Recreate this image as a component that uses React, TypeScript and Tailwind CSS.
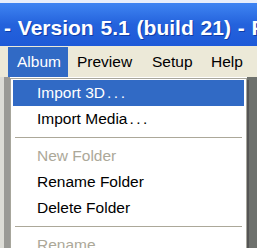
const menus = [
  { label: "Album", w: "w-[60px]" },
  { label: "Preview", w: "w-[75px]" },
  { label: "Setup", w: "w-[59px]" },
  { label: "Help", w: "w-[50px]" },
];

type Item = { label: string; dots?: boolean; disabled?: boolean; active?: boolean } | "sep";

const items: Item[] = [
  { label: "Import 3D", dots: true, active: true },
  { label: "Import Media", dots: true },
  "sep",
  { label: "New Folder", disabled: true },
  { label: "Rename Folder" },
  { label: "Delete Folder" },
  "sep",
  { label: "Rename", disabled: true },
];

function App() {
  return (
    <div className="relative w-[257px] h-[248px] overflow-hidden bg-[#9b9b98] font-['Liberation_Sans',Arial,sans-serif]">
      <div className="h-[3px] bg-[#e8eefb]" />
      <div className="h-[43px] bg-gradient-to-b from-[#3f84f2] via-[#2462dc] to-[#1e5ad8] flex items-center pl-[4px] pt-[7px]">
        <span className="whitespace-nowrap text-white font-bold text-[21px] [word-spacing:1px] [text-shadow:1px_1px_0_#0f3da8]">
          - Version 5.1 (build 21) - P
        </span>
      </div>
      <div className="h-[31px] bg-[#ece9d8] flex pl-[8px] pt-[1px]">
        {menus.map((m, i) => (
          <div
            key={m.label}
            className={
              i === 0
                ? `${m.w} shrink-0 h-[30px] pl-[9px] leading-[30px] text-[15.5px] bg-[#316ac5] text-white`
                : `${m.w} shrink-0 h-[30px] pl-[9px] leading-[30px] text-[15.5px] text-black`
            }
          >
            {m.label}
          </div>
        ))}
      </div>
      <div className="flex h-[171px]">
        <div className="w-[4px] bg-[#dcdcd6]" />
        <div className="w-[6px] bg-[#9a9a96]" />
        <div className="flex-1 bg-[#ffffff]" />
        <div className="w-[10px] bg-[#6e716d]" />
      </div>

      <div className="absolute left-[10px] top-[78px] w-[237px] bg-white border border-[#a7a69c] py-[1px] px-[2px] shadow-[2px_2px_0_#555]">
        {items.map((it, i) =>
          it === "sep" ? (
            <div key={i} className="h-[11px] flex items-center px-[2px]">
              <div className="h-[1px] w-full bg-[#aca899]" />
            </div>
          ) : (
            <div
              key={i}
              className={
                it.active
                  ? "h-[26px] leading-[26px] pl-[24px] text-[15.5px] whitespace-nowrap bg-[#316ac5] text-white"
                  : it.disabled
                  ? "h-[26px] leading-[26px] pl-[24px] text-[15.5px] whitespace-nowrap text-[#aca899]"
                  : "h-[26px] leading-[26px] pl-[24px] text-[15.5px] whitespace-nowrap text-black"
              }
            >
              {it.label}
              {it.dots && <span className="pl-[2px] tracking-[2.5px]">...</span>}
            </div>
          )
        )}
      </div>
    </div>
  );
}

export default App;
